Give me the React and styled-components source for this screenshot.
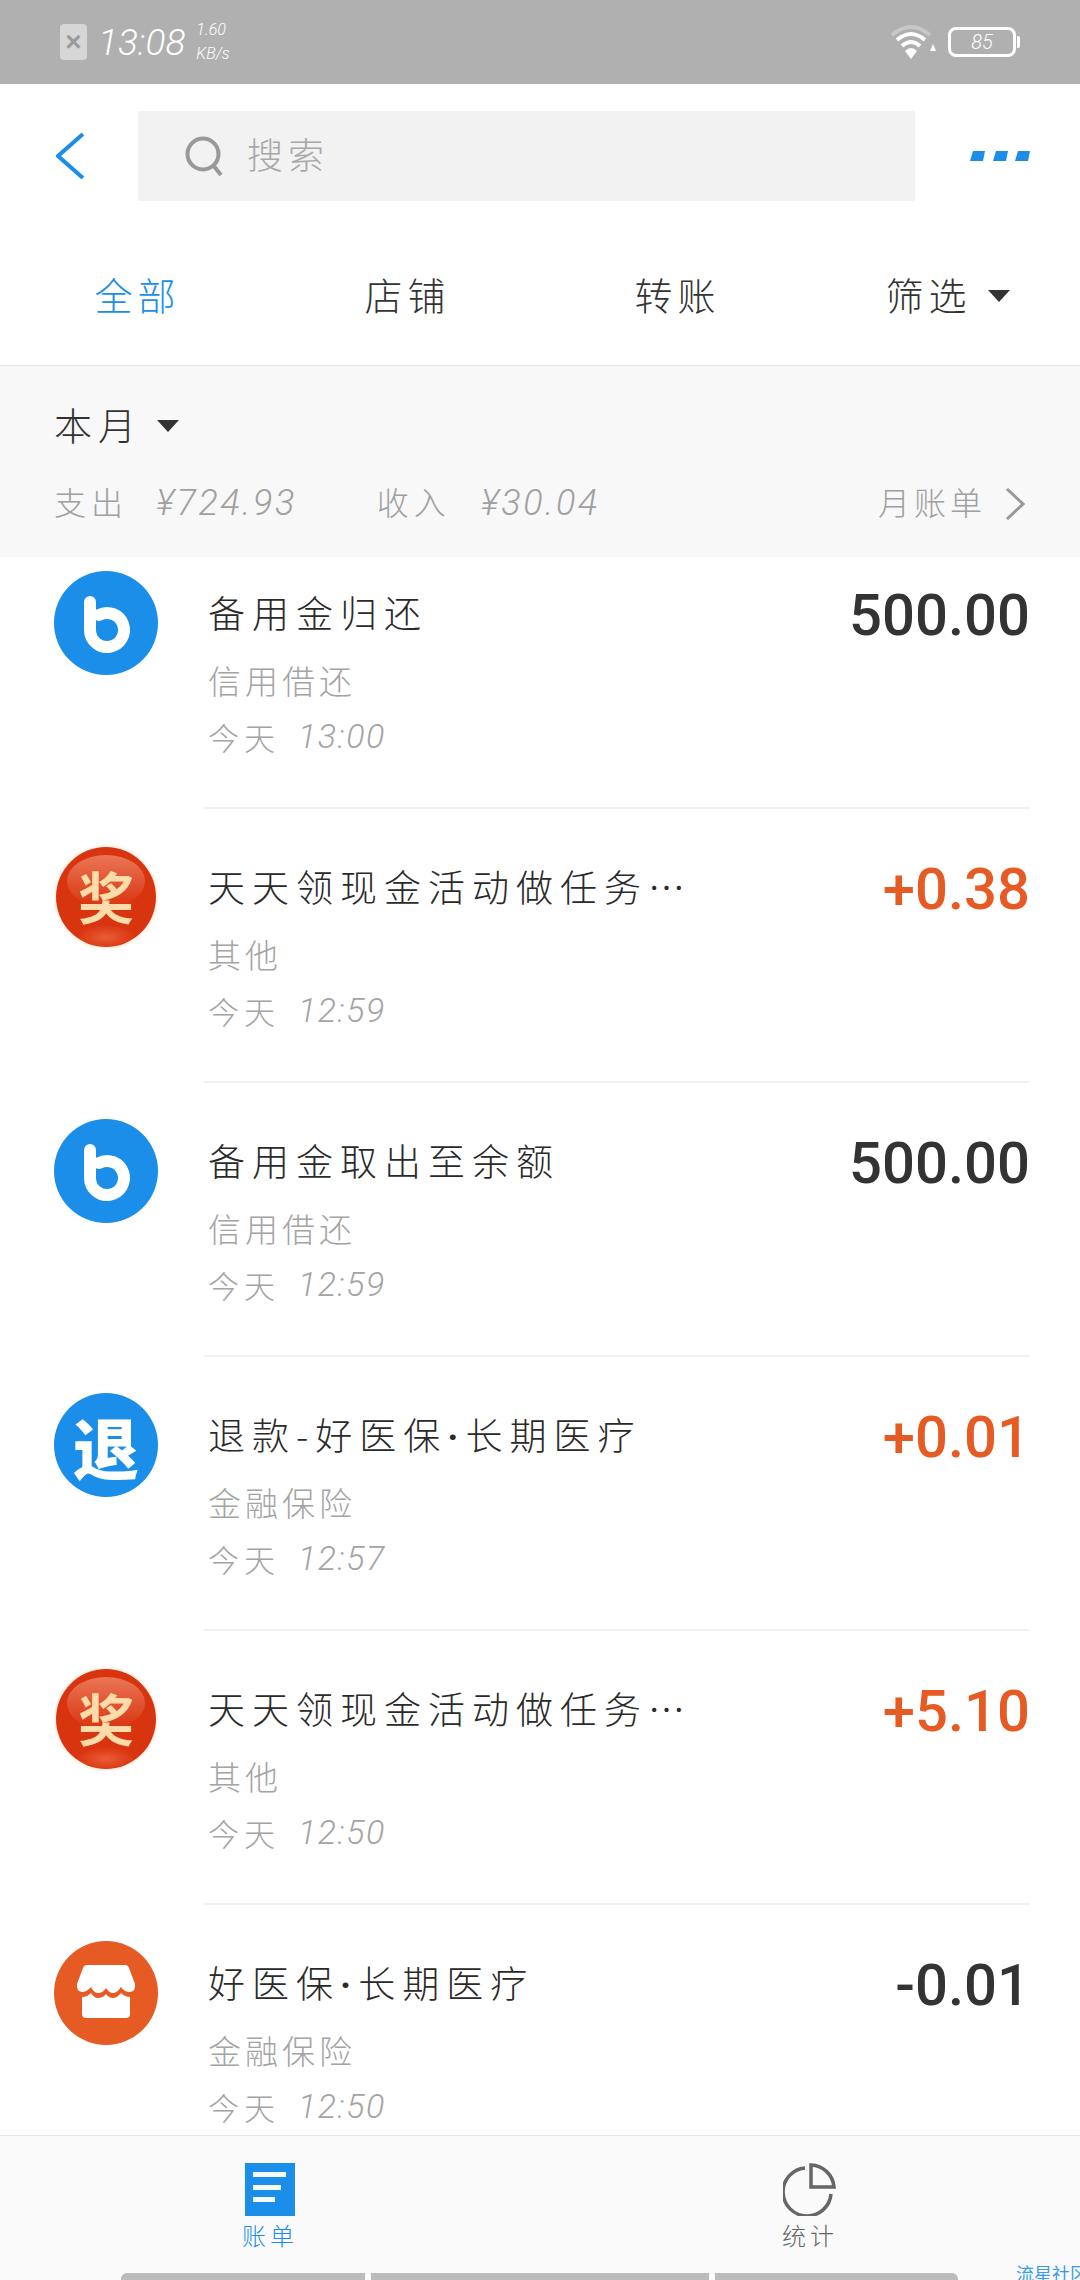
import React from "react";
import styled, { createGlobalStyle } from "styled-components";

const BLUE = "#1a8ee8";
const ORANGE = "#e65a24";
const CJK = `"Noto Sans CJK SC", "Noto Sans", sans-serif`;
const DIGITS = `Roboto, "Noto Sans CJK SC", sans-serif`;

const GlobalStyle = createGlobalStyle`
  html, body {
    margin: 0;
    padding: 0;
    background: #fff;
  }
  * {
    box-sizing: border-box;
  }
`;

const Page = styled.div`
  width: 1080px;
  height: 2280px;
  display: flex;
  flex-direction: column;
  overflow: hidden;
  position: relative;
  font-family: ${CJK};
  color: #333;
`;

const StatusBar = styled.div`
  height: 84px;
  flex: none;
  background: #b0b0b0;
  display: flex;
  align-items: center;
  padding: 0 64px 0 60px;
  color: #fff;
`;

const CloseBadge = styled.div`
  width: 27px;
  height: 36px;
  border-radius: 4px;
  background: #d6d6d6;
  color: #9a9a9a;
  font: 700 28px/36px "Liberation Sans", sans-serif;
  text-align: center;
`;

const Clock = styled.span`
  font: italic 300 37px/1 ${DIGITS};
  margin-left: 11px;
`;

const NetSpeed = styled.div`
  display: flex;
  flex-direction: column;
  gap: 8px;
  margin-left: 11px;
  font: italic 300 16px/1 ${DIGITS};
`;

const StatusRight = styled.div`
  margin-left: auto;
  display: flex;
  align-items: center;
  gap: 11px;
`;

const Battery = styled.div`
  width: 68px;
  height: 30px;
  border: 3px solid #fff;
  border-radius: 8px;
  display: flex;
  align-items: center;
  justify-content: center;
  font: italic 300 20px/1 ${DIGITS};
  position: relative;
  &::after {
    content: "";
    position: absolute;
    right: -7px;
    top: 6px;
    width: 3px;
    height: 12px;
    border-radius: 0 2px 2px 0;
    background: #fff;
  }
`;

const SearchRow = styled.div`
  height: 144px;
  flex: none;
  display: flex;
  align-items: center;
  padding: 0 50px 0 56px;
`;

const SearchBox = styled.div`
  width: 777px;
  height: 90px;
  margin-left: 54px;
  background: #f2f2f2;
  border-radius: 2px;
  display: flex;
  align-items: center;
  padding-left: 47px;
  gap: 24px;
  color: #a8a8a8;
`;

const SearchHint = styled.span`
  font-size: 36px;
  font-weight: 300;
  letter-spacing: 5px;
  padding-bottom: 7px;
`;

const MoreIcon = styled.svg`
  margin-left: auto;
`;

const Tabs = styled.div`
  height: 138px;
  flex: none;
  display: grid;
  grid-template-columns: repeat(4, 270px);
  border-bottom: 1px solid #e8e8e8;
`;

const Tab = styled.div`
  display: flex;
  align-items: center;
  justify-content: center;
  gap: 16px;
  padding: 0 0 7px 5px;
  font-size: 38px;
  font-weight: 300;
  letter-spacing: 5px;
  color: ${(p) => (p.$active ? BLUE : "#333")};
`;

const Caret = styled.span`
  width: 0;
  height: 0;
  margin-top: 6px;
  border-left: 11px solid transparent;
  border-right: 11px solid transparent;
  border-top: 12px solid #333;
`;

const Summary = styled.div`
  height: 191px;
  flex: none;
  background: #f8f8f8;
  padding: 32px 55px 0 54px;
`;

const MonthPicker = styled.div`
  display: flex;
  align-items: center;
  gap: 15px;
  height: 50px;
  font-size: 38px;
  font-weight: 300;
  letter-spacing: 6px;
`;

const Totals = styled.div`
  display: flex;
  align-items: center;
  height: 44px;
  margin-top: 34px;
  color: #a0a0a0;
  font-size: 32px;
  font-weight: 300;
`;

const TotalLabel = styled.span`
  letter-spacing: 5px;
  padding-bottom: 6px;
  margin-left: ${(p) => p.$gap || 0}px;
`;

const TotalValue = styled.span`
  font: italic 300 36px/1 ${DIGITS};
  letter-spacing: 2.5px;
  padding-bottom: 2px;
  margin-left: ${(p) => p.$gap}px;
`;

const BillLink = styled.div`
  margin-left: auto;
  display: flex;
  align-items: center;
  gap: 19px;
  letter-spacing: 4px;
`;

const BillLabel = styled.span`
  padding-bottom: 6px;
`;

const List = styled.div`
  flex: 1;
  min-height: 0;
  overflow: hidden;
  padding-top: 14px;
`;

const Row = styled.div`
  height: 274px;
  display: flex;
  align-items: flex-start;
  padding-left: 54px;
`;

const RowBody = styled.div`
  flex: 1;
  height: 238px;
  margin-left: 46px;
  margin-right: 50px;
  border-bottom: 2px solid #f1f1f1;
  position: relative;
  padding-left: 4px;
`;

const RowTitle = styled.div`
  height: 56px;
  margin-top: 13px;
  font-size: 37px;
  font-weight: 300;
  line-height: 56px;
  letter-spacing: 7px;
  color: #2a2a2a;
  white-space: nowrap;
`;

const MiddleDot = styled.span`
  font-family: Roboto, sans-serif;
  font-weight: 700;
`;

const RowCategory = styled.div`
  height: 40px;
  margin-top: 20px;
  font-size: 33px;
  font-weight: 300;
  line-height: 40px;
  letter-spacing: 4px;
  color: #a4a4a4;
`;

const RowTime = styled.div`
  height: 40px;
  margin-top: 16px;
  display: flex;
  align-items: center;
  gap: 18px;
  font-size: 31px;
  font-weight: 300;
  letter-spacing: 5px;
  color: #a4a4a4;
`;

const TimeDigits = styled.span`
  font: italic 300 34px/1 ${DIGITS};
  letter-spacing: 1.5px;
`;

const Amount = styled.div`
  position: absolute;
  right: 0;
  top: 13px;
  font: 500 58px/62px ${DIGITS};
  color: ${(p) => (p.$income ? ORANGE : "#333")};
`;

const Circle = styled.div`
  width: 104px;
  height: 104px;
  flex: none;
  border-radius: 50%;
  background: ${(p) => p.$color};
  display: flex;
  align-items: center;
  justify-content: center;
`;

const RefundGlyph = styled.span`
  color: #fff;
  font-size: 66px;
  font-weight: 900;
  line-height: 1;
`;

const PrizeBadge = styled(Circle)`
  width: 100px;
  height: 100px;
  margin: 2px;
  padding-bottom: 5px;
  position: relative;
  background:
    radial-gradient(ellipse 30px 12px at 50% 90%, rgba(240, 110, 70, 0.7), rgba(240, 110, 70, 0)),
    radial-gradient(circle at 50% 50%, #d93410 0%, #d93410 70%, #e2502a 86%, #f3a77c 95%, #fbd3ad 100%);
  box-shadow: 0 0 4px #fbd9b8;
  color: #fddcaa;
  font-size: 56px;
  font-weight: 700;
  line-height: 1;
  &::before {
    content: "";
    position: absolute;
    left: 11px;
    right: 11px;
    top: 8px;
    height: 52px;
    border-radius: 50%;
    background: linear-gradient(#ea7655, rgba(224, 70, 30, 0));
  }
`;

const PrizeGlyph = styled.span`
  position: relative;
`;

const TabBar = styled.div`
  height: 145px;
  flex: none;
  background: #fafafa;
  border-top: 1px solid #e8e8e8;
  display: flex;
  flex-direction: column;
`;

const NavRow = styled.div`
  flex: 1;
  display: grid;
  grid-template-columns: 540px 540px;
  padding-top: 27px;
`;

const NavItem = styled.div`
  display: flex;
  flex-direction: column;
  align-items: center;
  gap: 4px;
  font-size: 24px;
  font-weight: 300;
  line-height: 30px;
  letter-spacing: 4px;
  color: ${(p) => (p.$active ? BLUE : "#666")};
`;

const GestureBar = styled.div`
  height: 7px;
  flex: none;
  display: flex;
  gap: 6px;
  padding-left: 121px;
`;

const GestureSegment = styled.div`
  height: 7px;
  width: ${(p) => p.$width}px;
  background: #bbb;
  border-radius: ${(p) => p.$radius};
`;

const Watermark = styled.div`
  position: absolute;
  left: 1016px;
  top: 2262px;
  width: 64px;
  overflow: hidden;
  white-space: nowrap;
  font-size: 18px;
  line-height: 22px;
  color: #3c9be8;
`;

const BLogo = () => (
  <Circle $color={BLUE}>
    <svg width="104" height="104" viewBox="0 0 104 104">
      <path
        d="M36 31V59A17 17 0 1 0 45 44"
        fill="none"
        stroke="#fff"
        strokeWidth="12"
        strokeLinecap="round"
      />
    </svg>
  </Circle>
);

const PrizeLogo = () => (
  <PrizeBadge $color="#e03c12">
    <PrizeGlyph>奖</PrizeGlyph>
  </PrizeBadge>
);

const RefundLogo = () => (
  <Circle $color={BLUE}>
    <RefundGlyph>退</RefundGlyph>
  </Circle>
);

const ShopLogo = () => (
  <Circle $color={ORANGE}>
    <svg width="104" height="104" viewBox="0 0 104 104">
      <path
        d="M33 24H71Q74 24 75 27L81 43Q82 50 76 51Q70 51 67 46Q63 52 59 52Q55 52 52 47Q49 52 44 52Q40 52 37 46Q33 51 28 51Q22 50 23 43L29 27Q30 24 33 24Z"
        fill="#fff"
      />
      <path
        d="M28 56Q33 56 37 52Q40 57 44 57Q49 57 52 53Q55 57 59 57Q63 57 67 52Q71 56 76 56V73Q76 77 72 77H32Q28 77 28 73Z"
        fill="#fff"
      />
    </svg>
  </Circle>
);

const logos = { b: BLogo, prize: PrizeLogo, refund: RefundLogo, shop: ShopLogo };

const records = [
  { id: 1, logo: "b", title: ["备用金归还"], category: "信用借还", time: "13:00", amount: "500.00" },
  { id: 2, logo: "prize", title: ["天天领现金活动做任务…"], category: "其他", time: "12:59", amount: "+0.38", income: true },
  { id: 3, logo: "b", title: ["备用金取出至余额"], category: "信用借还", time: "12:59", amount: "500.00" },
  { id: 4, logo: "refund", title: ["退款-好医保", "长期医疗"], category: "金融保险", time: "12:57", amount: "+0.01", income: true },
  { id: 5, logo: "prize", title: ["天天领现金活动做任务…"], category: "其他", time: "12:50", amount: "+5.10", income: true },
  { id: 6, logo: "shop", title: ["好医保", "长期医疗"], category: "金融保险", time: "12:50", amount: "-0.01" },
];

export default function App() {
  return (
    <Page>
      <GlobalStyle />
      <StatusBar>
        <CloseBadge>×</CloseBadge>
        <Clock>13:08</Clock>
        <NetSpeed>
          <span>1.60</span>
          <span>KB/s</span>
        </NetSpeed>
        <StatusRight>
          <svg width="48" height="36" viewBox="0 0 48 36">
            <path d="M3 11Q22 -5 41 11" fill="none" stroke="#c8c8c8" strokeWidth="4" />
            <path d="M8 16Q22 4 36 16" fill="none" stroke="#fff" strokeWidth="4" />
            <path d="M13 22Q22 14 31 22" fill="none" stroke="#fff" strokeWidth="4" />
            <path d="M16 27Q22 21 28 27L22 35Z" fill="#fff" />
            <path d="M44 20L47 27H41Z" fill="#fff" />
          </svg>
          <Battery>85</Battery>
        </StatusRight>
      </StatusBar>

      <SearchRow>
        <svg width="28" height="46" viewBox="0 0 28 46">
          <path d="M27 1L2 23L27 45" fill="none" stroke={BLUE} strokeWidth="4" />
        </svg>
        <SearchBox>
          <svg width="38" height="40" viewBox="0 0 38 40">
            <circle cx="18" cy="18" r="15.5" fill="none" stroke="#999" strokeWidth="4" />
            <path d="M28 29L36 39" stroke="#999" strokeWidth="4" />
          </svg>
          <SearchHint>搜索</SearchHint>
        </SearchBox>
        <MoreIcon width="60" height="10" viewBox="0 0 60 10">
          <path d="M3 0H15L13 10H0ZM26 0H38L36 10H23ZM48 0H60L58 10H45Z" fill={BLUE} />
        </MoreIcon>
      </SearchRow>

      <Tabs>
        <Tab $active>全部</Tab>
        <Tab>店铺</Tab>
        <Tab>转账</Tab>
        <Tab>
          筛选
          <Caret />
        </Tab>
      </Tabs>

      <Summary>
        <MonthPicker>
          本月
          <Caret />
        </MonthPicker>
        <Totals>
          <TotalLabel>支出</TotalLabel>
          <TotalValue $gap={28}>¥724.93</TotalValue>
          <TotalLabel $gap={80}>收入</TotalLabel>
          <TotalValue $gap={30}>¥30.04</TotalValue>
          <BillLink>
            <BillLabel>月账单</BillLabel>
            <svg width="20" height="32" viewBox="0 0 20 32">
              <path d="M2 1L18 16L2 31" fill="none" stroke="#999" strokeWidth="3" />
            </svg>
          </BillLink>
        </Totals>
      </Summary>

      <List>
        {records.map((record) => {
          const Logo = logos[record.logo];
          return (
            <Row key={record.id}>
              <Logo />
              <RowBody>
                <RowTitle>
                  {record.title[0]}
                  {record.title[1] && <MiddleDot>·</MiddleDot>}
                  {record.title[1]}
                </RowTitle>
                <RowCategory>{record.category}</RowCategory>
                <RowTime>
                  今天
                  <TimeDigits>{record.time}</TimeDigits>
                </RowTime>
                <Amount $income={record.income}>{record.amount}</Amount>
              </RowBody>
            </Row>
          );
        })}
      </List>

      <TabBar>
        <NavRow>
          <NavItem $active>
            <svg width="50" height="53" viewBox="0 0 50 53">
              <rect width="50" height="53" fill={BLUE} />
              <path d="M8 9H41V14H8ZM8 22H36V27H8ZM8 34H30V39H8Z" fill="#f4fbff" />
            </svg>
            账单
          </NavItem>
          <NavItem>
            <svg width="54" height="53" viewBox="0 0 54 53">
              <path d="M22 5A24 24 0 1 0 48 31" fill="none" stroke="#666" strokeWidth="3.5" />
              <path d="M28 2A24 24 0 0 1 51 24H28Z" fill="none" stroke="#666" strokeWidth="3.5" />
            </svg>
            统计
          </NavItem>
        </NavRow>
        <GestureBar>
          <GestureSegment $width={244} $radius="6px 0 0 0" />
          <GestureSegment $width={338} $radius="0" />
          <GestureSegment $width={243} $radius="0 6px 0 0" />
        </GestureBar>
      </TabBar>
      <Watermark>流星社区</Watermark>
    </Page>
  );
}
